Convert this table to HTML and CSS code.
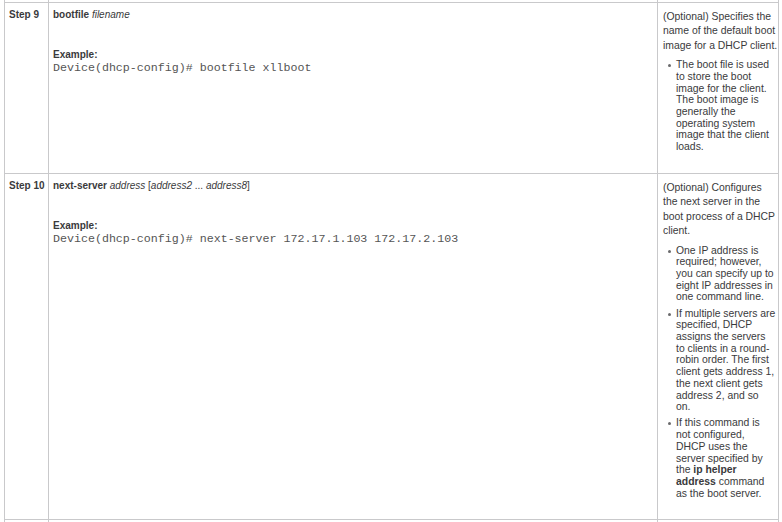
FILE: index.html
```html
<!DOCTYPE html>
<html>
<head>
<meta charset="utf-8">
<link rel="stylesheet" href="styles.css">
</head>
<body>
<table class="steps">
  <colgroup><col class="c-step"><col class="c-cmd"><col class="c-desc"></colgroup>
  <tr class="prev"><td></td><td></td><td></td></tr>
  <tr class="row-9">
    <td class="step">Step 9</td>
    <td class="cmd">
      <div class="syntax"><b>bootfile</b> <i>filename</i></div>
      <div class="ex-label">Example:</div>
      <div class="code">Device(dhcp-config)# bootfile xllboot</div>
    </td>
    <td class="desc">
      <p>(Optional) Specifies the name of the default boot image for a DHCP client.</p>
      <ul>
        <li>The boot file is used to store the boot image for the client. The boot image is generally the operating system image that the client loads.</li>
      </ul>
    </td>
  </tr>
  <tr class="row-10">
    <td class="step">Step 10</td>
    <td class="cmd">
      <div class="syntax"><b>next-server</b> <i>address</i> [<i>address2</i> ... <i>address8</i>]</div>
      <div class="ex-label">Example:</div>
      <div class="code">Device(dhcp-config)# next-server 172.17.1.103 172.17.2.103</div>
    </td>
    <td class="desc">
      <p>(Optional) Configures the next server in the boot process of a DHCP client.</p>
      <ul>
        <li>One IP address is required; however, you can specify up to eight IP addresses in one command line.</li>
        <li>If multiple servers are specified, DHCP assigns the servers to clients in a round-robin order. The first client gets address 1, the next client gets address 2, and so on.</li>
        <li>If this command is not configured, DHCP uses the server specified by the <b>ip helper address</b> command as the boot server.</li>
      </ul>
    </td>
  </tr>
  <tr class="next"><td></td><td></td><td></td></tr>
</table>
</body>
</html>
```
FILE: styles.css
```css
html, body {
  margin: 0;
  padding: 0;
  background: #ffffff;
}
body {
  font-family: "Liberation Sans", Arial, sans-serif;
  font-size: 10px;
  color: #3a3a3c;
}
.steps {
  border-collapse: collapse;
  table-layout: fixed;
  width: 774px;
  margin: -1px 0 0 4px;
}
.c-step { width: 44px; }
.c-cmd { width: 609px; }
.c-desc { width: 121px; }
.steps td {
  border: 1px solid #c9c9cb;
  vertical-align: top;
  padding: 0;
}
.prev td { height: 3px; border-top: none; }
.next td { height: 4px; border-bottom: none; }
.row-9 td { height: 163px; }
.row-10 td { height: 338px; }
.step {
  font-weight: bold;
  padding: 6px 4px 0 4px !important;
  line-height: 12px;
  white-space: nowrap;
}
.cmd {
  padding: 6px 4px 0 4px !important;
  line-height: 12px;
}
.syntax b { font-weight: bold; }
.syntax i { font-style: italic; }
.ex-label {
  font-weight: bold;
  margin-top: 28px;
}
.code {
  font-family: "Liberation Mono", "Courier New", monospace;
  font-size: 11.65px;
  color: #555555;
  line-height: 14px;
  white-space: pre;
}
.desc {
  padding: 7px 0 0 5px !important;
  font-size: 10.4px;
}
.desc p {
  margin: 0;
  line-height: 14.4px;
}
.desc ul {
  margin: 6px 0 0 0;
  padding: 0 2.3px 0 13px;
  line-height: 11.7px;
  list-style: none;
}
.desc li {
  position: relative;
  margin-bottom: 4.5px;
}
.desc li::before {
  content: "";
  position: absolute;
  left: -8px;
  top: 5px;
  width: 3px;
  height: 3px;
  border-radius: 50%;
  background: #6a6a6c;
}
```
